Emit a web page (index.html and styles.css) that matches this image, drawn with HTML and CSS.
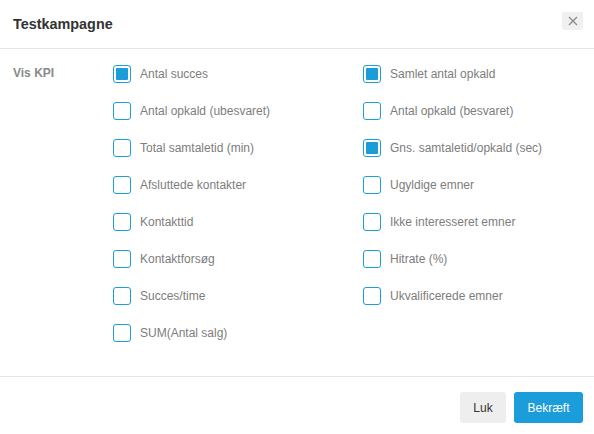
FILE: index.html
```html
<!DOCTYPE html>
<html lang="da">
<head>
<meta charset="utf-8">
<title>Testkampagne</title>
<link rel="stylesheet" href="styles.css">
</head>
<body>
<div class="modal">
  <header class="modal-header">
    <h1 class="modal-title">Testkampagne</h1>
    <button class="close-btn" aria-label="Luk">
      <svg width="10" height="10" viewBox="0 0 10 10"><path d="M1 1L9 9M9 1L1 9" stroke="#8a8a8a" stroke-width="1.3" fill="none"/></svg>
    </button>
  </header>
  <div class="modal-body">
    <div class="field-label">Vis KPI</div>
    <div class="kpi-grid">
      <label class="kpi"><span class="box checked"></span><span class="kpi-text">Antal succes</span></label>
      <label class="kpi"><span class="box checked"></span><span class="kpi-text">Samlet antal opkald</span></label>
      <label class="kpi"><span class="box"></span><span class="kpi-text">Antal opkald (ubesvaret)</span></label>
      <label class="kpi"><span class="box"></span><span class="kpi-text">Antal opkald (besvaret)</span></label>
      <label class="kpi"><span class="box"></span><span class="kpi-text">Total samtaletid (min)</span></label>
      <label class="kpi"><span class="box checked"></span><span class="kpi-text">Gns. samtaletid/opkald (sec)</span></label>
      <label class="kpi"><span class="box"></span><span class="kpi-text">Afsluttede kontakter</span></label>
      <label class="kpi"><span class="box"></span><span class="kpi-text">Ugyldige emner</span></label>
      <label class="kpi"><span class="box"></span><span class="kpi-text">Kontakttid</span></label>
      <label class="kpi"><span class="box"></span><span class="kpi-text">Ikke interesseret emner</span></label>
      <label class="kpi"><span class="box"></span><span class="kpi-text">Kontaktforsøg</span></label>
      <label class="kpi"><span class="box"></span><span class="kpi-text">Hitrate (%)</span></label>
      <label class="kpi"><span class="box"></span><span class="kpi-text">Succes/time</span></label>
      <label class="kpi"><span class="box"></span><span class="kpi-text">Ukvalificerede emner</span></label>
      <label class="kpi"><span class="box"></span><span class="kpi-text">SUM(Antal salg)</span></label>
    </div>
  </div>
  <footer class="modal-footer">
    <button class="btn btn-default">Luk</button>
    <button class="btn btn-primary">Bekræft</button>
  </footer>
</div>
</body>
</html>
```
FILE: styles.css
```css
* { box-sizing: border-box; }
html, body { margin: 0; padding: 0; background: #fff; }
body {
  font-family: "Liberation Sans", Arial, Helvetica, sans-serif;
  font-size: 12px;
  color: #777;
}
.modal { width: 594px; height: 434px; background: #fff; }
.modal-header {
  height: 49px;
  border-bottom: 1px solid #e5e5e5;
  display: flex;
  justify-content: space-between;
  align-items: flex-start;
  padding: 0 11px 0 13px;
}
.modal-title {
  margin: 14px 0 0;
  font-size: 14.4px;
  line-height: 20px;
  font-weight: bold;
  color: #333;
}
.close-btn {
  margin-top: 12px;
  width: 21px;
  height: 18px;
  border: none;
  border-radius: 2px;
  background: #f0f0f0;
  padding: 0;
  display: flex;
  align-items: center;
  justify-content: center;
}
.modal-body {
  display: flex;
  padding: 6px 0 0 13px;
  height: 328px;
  border-bottom: 1px solid #e5e5e5;
}
.field-label {
  width: 100px;
  flex: none;
  height: 37px;
  line-height: 37px;
  font-weight: bold;
  color: #8a8a8a;
}
.kpi-grid {
  display: grid;
  grid-template-columns: 250px 1fr;
  grid-auto-rows: 37px;
}
.kpi {
  display: flex;
  align-items: center;
  gap: 9px;
}
.box {
  width: 18px;
  height: 18px;
  border: 1px solid #1a9dd9;
  border-radius: 3px;
  padding: 2px;
  background: #fff;
  flex: none;
}
.box.checked::after {
  content: "";
  display: block;
  width: 100%;
  height: 100%;
  background: #1a9dd9;
  border-radius: 1px;
}
.kpi-text { color: #7d7d7d; }
.modal-footer {
  display: flex;
  justify-content: flex-end;
  gap: 8px;
  padding: 15px 11px 0 0;
}
.btn {
  height: 31px;
  border: none;
  border-radius: 3px;
  font-family: inherit;
  font-size: 12px;
  padding: 0;
}
.btn-default { width: 46px; background: #eeeeee; color: #333; }
.btn-primary { width: 69px; background: #1a9dd9; color: #fff; }
```
